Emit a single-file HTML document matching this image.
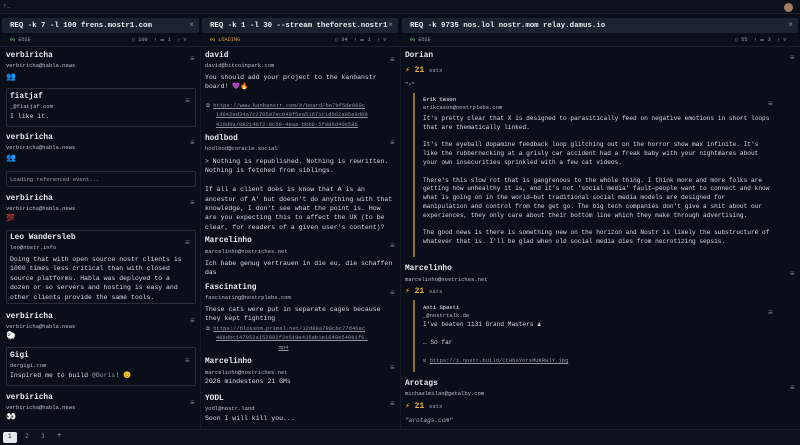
<!DOCTYPE html>
<html><head><meta charset="utf-8"><style>
*{margin:0;padding:0;box-sizing:border-box}
body{width:800px;height:445px;background:#0a0e18;overflow:hidden;position:relative;font-family:"Liberation Mono","DejaVu Sans Mono",monospace;color:#d6dae2}
.a{position:absolute;white-space:pre;line-height:1}
.n{font-weight:bold;font-size:7.8px;color:#e8ebf0}
.h{font-size:5.5px;color:#b8bdc7}
.x{font-size:6.5px;color:#d6dae2}
.x3{font-size:6.15px;color:#d6dae2}
.m{font-size:8px;color:#7a8290}
.l{text-decoration:underline;color:#8d95a3}
.box{position:absolute;border:1px solid #262d3a;border-radius:2px}
.hdr{position:absolute;top:18px;height:15px;background:#1b2331;border-radius:2px}
.hdr span{position:absolute;left:8px;top:4px;font-weight:bold;font-size:7.4px;color:#e6e9ee;white-space:pre}
.hdr i{position:absolute;right:5px;top:3px;font-style:normal;font-size:8px;color:#8a92a0}
.st{position:absolute;top:37px;font-size:5.2px;white-space:pre}
.bar{position:absolute;width:1.5px;background:#8a7330}
.zr{font-size:8px;line-height:1}
.zap{font-size:8px;color:#f2b231;font-weight:bold}
.sats{font-size:5.6px;color:#9aa1ad}
</style></head><body>
<div class="a" style="left:0;top:0;width:800px;height:14px;background:#0c111c;border-bottom:1px solid #1a2030"></div>
<div class="a" style="left:3px;top:3px;font-size:6px;color:#8a92a0">›_</div>
<div class="a" style="left:784px;top:3px;width:9px;height:9px;border-radius:50%;background:#a08060"></div>

<div class="hdr" style="left:2px;width:197px"><span>REQ -k 7 -l 100 frens.mostr1.com</span><i>×</i></div>
<div class="hdr" style="left:202px;width:196px;overflow:hidden"><span>REQ -k 1 -l 30 --stream theforest.nostr1</span><i style="background:#1b2331">×</i></div>
<div class="hdr" style="left:402px;width:396px"><span>REQ -k 9735 nos.lol nostr.mom relay.damus.io</span><i>×</i></div>

<div class="st" style="left:10px;color:#6fbf73">⋈ <span style="color:#9aa1ad">EOSE</span></div>
<div class="st" style="left:132px;color:#9aa1ad">▯ 100  › ⚌ 1  › ▽</div>
<div class="st" style="left:210px;color:#e0a030">⋈ LOADING</div>
<div class="st" style="left:335px;color:#9aa1ad">▯ 34  › ⚌ 1  › ▽</div>
<div class="st" style="left:410px;color:#6fbf73">⋈ <span style="color:#9aa1ad">EOSE</span></div>
<div class="st" style="left:735px;color:#9aa1ad">▯ 55  › ⚌ 3  › ▽</div>
<div class="a" style="left:0;top:46px;width:800px;height:1px;background:#1a2030"></div>
<div class="a" style="left:200px;top:46px;width:1px;height:383px;background:#141a26"></div>
<div class="a" style="left:400px;top:46px;width:1px;height:383px;background:#141a26"></div>

<!-- col1 -->
<div class="a n" style="left:6px;top:53px">verbiricha</div>
<div class="a h" style="left:6px;top:63px">verbiricha@habla.news</div>
<div class="a m" style="left:190px;top:56px">≡</div>
<div class="a" style="left:6px;top:74px;font-size:8px">👥</div>
<div class="box" style="left:6px;top:88px;width:190px;height:39px"></div>
<div class="a n" style="left:10px;top:94px">fiatjaf</div>
<div class="a h" style="left:10px;top:104px">_@fiatjaf.com</div>
<div class="a x" style="left:10px;top:114px">I like it.</div>
<div class="a m" style="left:185px;top:98px">≡</div>

<div class="a n" style="left:6px;top:135px">verbiricha</div>
<div class="a h" style="left:6px;top:145px">verbiricha@habla.news</div>
<div class="a m" style="left:190px;top:140px">≡</div>
<div class="a" style="left:6px;top:155px;font-size:8px">👥</div>
<div class="box" style="left:6px;top:171px;width:190px;height:16px"></div>
<div class="a h" style="left:10px;top:177px;color:#9aa1ad">Loading referenced event...</div>

<div class="a n" style="left:6px;top:196px">verbiricha</div>
<div class="a h" style="left:6px;top:206px">verbiricha@habla.news</div>
<div class="a m" style="left:190px;top:200px">≡</div>
<div class="a" style="left:6px;top:216px;font-size:7px">💯</div>
<div class="box" style="left:6px;top:230px;width:190px;height:74px"></div>
<div class="a n" style="left:10px;top:235px">Leo Wandersleb</div>
<div class="a h" style="left:10px;top:245px">leo@nostr.info</div>
<div class="a x" style="left:10px;top:255px;line-height:9.4px">Doing that with open source nostr clients is
1000 times less critical than with closed
source platforms. Habla was deployed to a
dozen or so servers and hosting is easy and
other clients provide the same tools.</div>
<div class="a m" style="left:185px;top:240px">≡</div>

<div class="a n" style="left:6px;top:314px">verbiricha</div>
<div class="a h" style="left:6px;top:324px">verbiricha@habla.news</div>
<div class="a m" style="left:190px;top:318px">≡</div>
<div class="a" style="left:6px;top:333px;font-size:8px">🐑</div>
<div class="box" style="left:6px;top:347px;width:190px;height:39px"></div>
<div class="a n" style="left:10px;top:353px">Gigi</div>
<div class="a h" style="left:10px;top:363px">dergigi.com</div>
<div class="a x" style="left:10px;top:373px">Inspired me to build <span style="color:#8d95a3">@Boris</span>! 😊</div>
<div class="a m" style="left:185px;top:358px">≡</div>

<div class="a n" style="left:6px;top:395px">verbiricha</div>
<div class="a h" style="left:6px;top:405px">verbiricha@habla.news</div>
<div class="a m" style="left:190px;top:400px">≡</div>
<div class="a" style="left:6px;top:414px;font-size:8px">👀</div>

<!-- col2 -->
<div class="a n" style="left:205px;top:53px">david</div>
<div class="a h" style="left:205px;top:63px">david@bitcoinpark.com</div>
<div class="a m" style="left:390px;top:57px">≡</div>
<div class="a x" style="left:205px;top:73px;line-height:9.4px">You should add your project to the kanbanstr
board! 💜🔥</div>
<div class="a h" style="left:206px;top:101px;line-height:9.4px;color:#8d95a3">⧉ <span class="l">https://www.kanbanstr.com/#/board/be7bf5de060c</span>
   <span class="l">1d842ed34a7c270507ec940f5ea51671c1d062a95e9d09</span>
   <span class="l">420d0a/08214072-8c60-4eaa-bbb8-5f086d40e585</span></div>

<div class="a n" style="left:205px;top:136px">hodlbod</div>
<div class="a h" style="left:205px;top:146px">hodlbod@coracle.social</div>
<div class="a m" style="left:390px;top:140px">≡</div>
<div class="a x" style="left:205px;top:157px;line-height:9.4px">&gt; Nothing is republished. Nothing is rewritten.
Nothing is fetched from siblings.

If all a client does is know that A is an
ancestor of A' but doesn't do anything with that
knowledge, I don't see what the point is. How
are you expecting this to affect the UX (to be
clear, for readers of a given user's content)?</div>

<div class="a n" style="left:205px;top:238px">Marcelinho</div>
<div class="a h" style="left:205px;top:249px">marcelinho@nostriches.net</div>
<div class="a m" style="left:390px;top:243px">≡</div>
<div class="a x" style="left:205px;top:259px;line-height:9.4px">Ich habe genug vertrauen in die eu, die schaffen
das</div>

<div class="a n" style="left:205px;top:285px">Fascinating</div>
<div class="a h" style="left:205px;top:295px">fascinating@nostrplebs.com</div>
<div class="a m" style="left:390px;top:290px">≡</div>
<div class="a x" style="left:205px;top:305px;line-height:9.4px">These cats were put in separate cages because
they kept fighting</div>
<div class="a h" style="left:206px;top:324px;line-height:9.4px;color:#8d95a3">⧉ <span class="l">https://blossom.primal.net/12d88a789cbc77d46ac</span>
   <span class="l">489dbc147052a152802f2e519e435ab1e1640e54061f6.</span>
                      <span class="l">mp4</span></div>

<div class="a n" style="left:205px;top:359px">Marcelinho</div>
<div class="a h" style="left:205px;top:370px">marcelinho@nostriches.net</div>
<div class="a m" style="left:390px;top:365px">≡</div>
<div class="a x" style="left:205px;top:379px">2026 mindestens 21 GMs</div>

<div class="a n" style="left:205px;top:396px">YODL</div>
<div class="a h" style="left:205px;top:406px">yodl@nostr.land</div>
<div class="a m" style="left:390px;top:401px">≡</div>
<div class="a x" style="left:205px;top:416px">Soon I will kill you...</div>

<!-- col3 -->
<div class="a n" style="left:405px;top:53px">Dorian</div>
<div class="a m" style="left:790px;top:55px">≡</div>
<div class="a zr" style="left:405px;top:67px"><span class="zap">⚡ 21</span> <span class="sats">sats</span></div>
<div class="a h" style="left:405px;top:82px">"⚡"</div>
<div class="bar" style="left:413px;top:93px;height:164px"></div>
<div class="a h" style="left:423px;top:97px;font-weight:bold">Erik Cason</div>
<div class="a h" style="left:423px;top:105px">erikcason@nostrplebs.com</div>
<div class="a m" style="left:768px;top:101px">≡</div>
<div class="a x3" style="left:423px;top:115px;line-height:8.8px">It's pretty clear that X is designed to parasitically feed on negative emotions in short loops
that are thematically linked.

It's the eyeball dopamine feedback loop glitching out on the horror show max infinite. It's
like the rubbernecking at a grisly car accident had a freak baby with your nightmares about
your own insecurities sprinkled with a few cat videos.

There's this slow rot that is gangrenous to the whole thing. I think more and more folks are
getting how unhealthy it is, and it's not 'social media' fault—people want to connect and know
what is going on in the world—but traditional social media models are designed for
manipulation and control from the get go. The big tech companies don't give a shit about our
experiences, they only care about their bottom line which they make through advertising.

The good news is there is something new on the horizon and Nostr is likely the substructure of
whatever that is. I'll be glad when old social media dies from necrotizing sepsis.</div>

<div class="a n" style="left:405px;top:266px">Marcelinho</div>
<div class="a h" style="left:405px;top:277px">marcelinho@nostriches.net</div>
<div class="a m" style="left:790px;top:271px">≡</div>
<div class="a zr" style="left:405px;top:288px"><span class="zap">⚡ 21</span> <span class="sats">sats</span></div>
<div class="bar" style="left:413px;top:300px;height:72px"></div>
<div class="a h" style="left:423px;top:305px;font-weight:bold">Anti Spasti</div>
<div class="a h" style="left:423px;top:313px">_@nostrtalk.de</div>
<div class="a m" style="left:768px;top:310px">≡</div>
<div class="a x3" style="left:423px;top:322px">I've beaten 1131 Grand Masters ♟</div>
<div class="a x3" style="left:423px;top:340px">… So far</div>
<div class="a h" style="left:423px;top:358px;color:#8d95a3">⊡ <span class="l">https://i.nostr.build/CtHbaYorsMUKRwlY.jpg</span></div>

<div class="a n" style="left:405px;top:381px">Arotags</div>
<div class="a h" style="left:405px;top:391px">michaelmilan@getalby.com</div>
<div class="a m" style="left:790px;top:385px">≡</div>
<div class="a zr" style="left:405px;top:403px"><span class="zap">⚡ 21</span> <span class="sats">sats</span></div>
<div class="a x3" style="left:405px;top:418px;color:#a8aeb8;font-style:italic">"arotags.com"</div>

<!-- bottom -->
<div class="a" style="left:0;top:429px;width:800px;height:16px;background:#0c111c;border-top:1px solid #1a2030"></div>
<div class="a" style="left:3px;top:432px;width:14px;height:11px;background:#e6e8ec;border-radius:2px"></div>
<div class="a" style="left:8px;top:434px;font-size:6px;color:#222">1</div>
<div class="a" style="left:25px;top:434px;font-size:6px;color:#8a92a0">2</div>
<div class="a" style="left:41px;top:434px;font-size:6px;color:#8a92a0">3</div>
<div class="a" style="left:57px;top:433px;font-size:7px;color:#b0b6c0">+</div>
</body></html>
